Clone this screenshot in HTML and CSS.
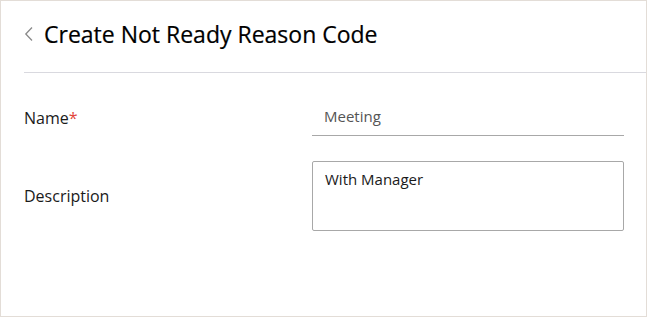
FILE: index.html
```html
<!DOCTYPE html>
<html>
<head>
<meta charset="utf-8">
<link rel="stylesheet" href="styles.css">
</head>
<body>
<div class="panel">
  <header class="header">
    <button class="back" aria-label="Back">
      <svg width="10" height="16" viewBox="0 0 10 16"><path d="M8 1.5 L1.8 8 L8 14.5" fill="none" stroke="#8a8a8a" stroke-width="1.3"/></svg>
    </button>
    <h1 class="title">Create Not Ready Reason Code</h1>
  </header>
  <form class="form">
    <label class="label" for="name">Name<span class="req">*</span></label>
    <input class="input" id="name" type="text" value="Meeting">
    <label class="label" for="desc">Description</label>
    <textarea class="textarea" id="desc">With Manager</textarea>
  </form>
</div>
</body>
</html>
```
FILE: styles.css
```css
* { box-sizing: border-box; }
html, body { margin: 0; padding: 0; background: #fff; }
body { font-family: "Open Sans", "Noto Sans", sans-serif; color: #111; }
.panel {
  width: 647px;
  height: 317px;
  border: 1px solid #e3ddd7;
  overflow: hidden;
}
.header {
  display: flex;
  align-items: center;
  height: 72px;
  padding-bottom: 6px;
  margin-left: 23px;
  border-bottom: 1px solid #d9d9df;
}
.back {
  display: flex;
  align-items: center;
  background: none;
  border: 0;
  padding: 0;
  margin: 0 10px 0 0;
  width: 10px;
  cursor: pointer;
}
.title {
  margin: 0;
  font-size: 23px;
  font-weight: 500;
  color: #000;
  letter-spacing: 0;
  -webkit-text-stroke: 0.2px #000;
}
.form {
  display: grid;
  grid-template-columns: 288px 312px;
  row-gap: 25px;
  align-items: center;
  padding: 27px 0 0 23px;
}
.label {
  font-size: 16px;
  color: #1a1a1a;
}
.req { color: #e2453a; }
.input {
  height: 36px;
  border: 0;
  border-bottom: 1px solid #a8a8a8;
  padding: 0 12px 3px;
  font: inherit;
  font-size: 15px;
  color: #555;
  outline: none;
}
.textarea {
  height: 70px;
  border: 1px solid #a8a8a8;
  border-radius: 2px;
  padding: 7px 12px;
  font: inherit;
  font-size: 15px;
  color: #1a1a1a;
  resize: none;
  outline: none;
}
```
